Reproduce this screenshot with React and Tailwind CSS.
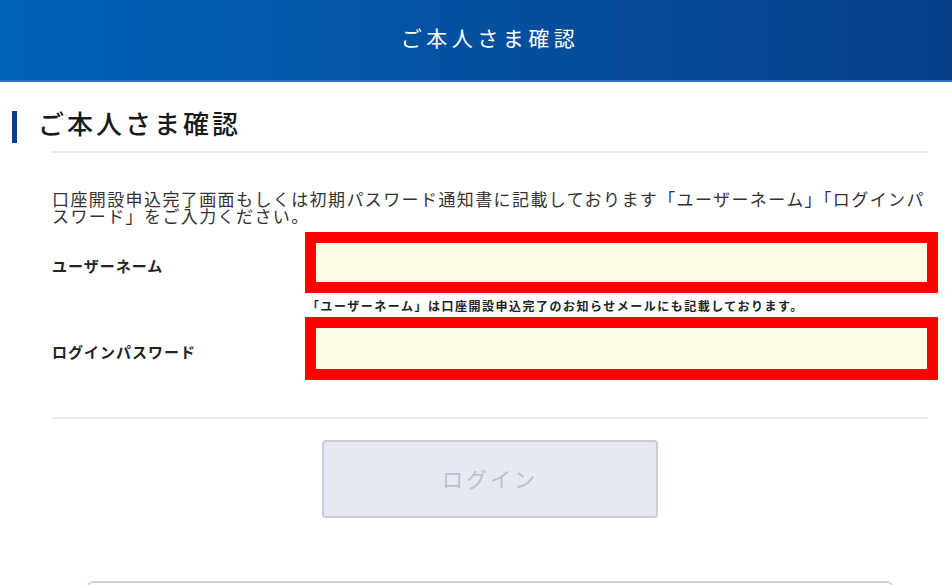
export default function App() {
  const font = { fontFamily: '"Noto Sans CJK JP", "Noto Sans", sans-serif' };
  return (
    <div className="w-[952px] h-[585px] overflow-hidden bg-white text-[#222]" style={font}>
      {/* Header */}
      <header className="h-[82px] bg-gradient-to-r from-[#0062b8] to-[#063f88] border-b-2 border-[#2f6fc0] flex items-center">
        <div className="ml-[52px] w-[876px] flex justify-center">
          <h1 className="text-white text-[21px] tracking-[4.5px] leading-none -mt-[6px]">ご本人さま確認</h1>
        </div>
      </header>

      {/* Page title */}
      <div className="flex items-start pt-[24px] pl-[12px]">
        <div className="w-[5px] h-[32px] mt-[5px] bg-[#0a3d8f]" />
        <h2 className="ml-[21px] text-[26px] tracking-[3px] leading-[34px] font-medium text-[#1a1a1a]">ご本人さま確認</h2>
      </div>

      <div className="ml-[52px] w-[876px]">
        <div className="mt-[8px] h-[2px] bg-[#e9ebf2]" />

        <p className="mt-[37px] text-[17px] tracking-[1.4px] leading-[17px] text-[#333]">
          口座開設申込完了画面もしくは初期パスワード通知書に記載しております「ユーザーネーム」「ログインパスワード」をご入力ください。
        </p>

        {/* Username */}
        <div className="mt-[8px] flex items-center">
          <label className="w-[253px] shrink-0 pt-[8px] text-[15px] tracking-[1px] font-bold text-[#222]">ユーザーネーム</label>
          <div className="w-[633px] shrink-0 h-[61px] border-[11px] border-[#ff0000] bg-[#fffce6]" />
        </div>
        <p className="ml-[255px] mt-[5px] text-[12px] leading-[16px] font-bold tracking-[1.5px] text-[#222]">
          「ユーザーネーム」は口座開設申込完了のお知らせメールにも記載しております。
        </p>

        {/* Password */}
        <div className="mt-[3px] flex items-center">
          <label className="w-[253px] shrink-0 pt-[8px] text-[15px] tracking-[1px] font-bold text-[#222]">ログインパスワード</label>
          <div className="w-[633px] shrink-0 h-[63px] border-[11px] border-[#ff0000] bg-[#fffce6]" />
        </div>

        <div className="mt-[37px] h-[2px] bg-[#e9ebf2]" />

        <div className="mt-[21px] flex justify-center">
          <button className="w-[336px] h-[78px] rounded-[4px] border-2 border-[#c8cedb] bg-[#e6e9f1] text-[#b9c0cd] text-[21px] tracking-[3px]">
            ログイン
          </button>
        </div>

        <div className="mt-[63px] mx-[35px] h-[40px] rounded-t-[6px] border-2 border-[#ccd3e0]" />
      </div>
    </div>
  );
}
